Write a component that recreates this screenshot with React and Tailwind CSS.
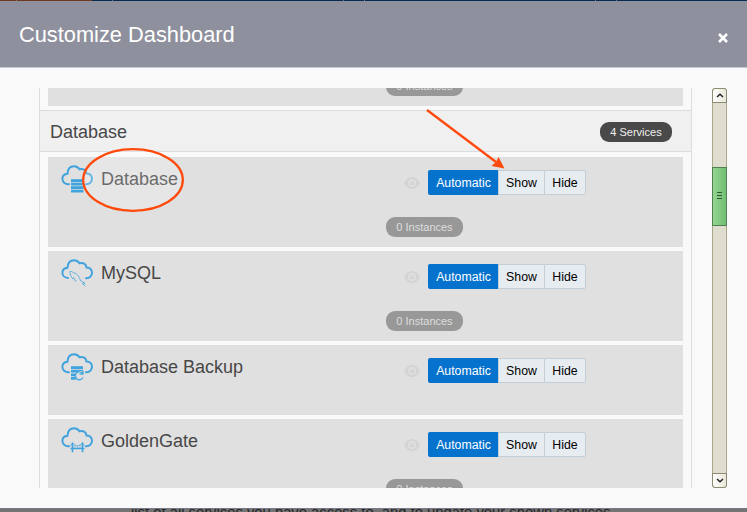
const clouds = {
  database: (
    <g fill="#41a3dd" stroke="none">
      <rect x="10" y="14.200" width="12.500" height="2.800" />
      <rect x="10" y="17.700" width="12.500" height="2.800" />
      <rect x="10" y="21.200" width="12.500" height="2.800" />
      <rect x="10" y="24.700" width="12.500" height="2.800" />
    </g>
  ),
  mysql: (
    <g strokeWidth="0.9" opacity="0.85">
      <path d="M12 20 C10 18 8.500 14 8.800 12.500 C10 12 11.500 13 12.500 13.700 C17 14.500 18.500 19 19.800 22 C21 22.700 23 23.300 24 24.300 L21.500 24.700 L24.300 27.200" />
      <path d="M12 20 L12.700 18.500 L14.500 22.300 L15.500 21.500" />
    </g>
  ),
  backup: (
    <g fill="#41a3dd" stroke="none">
      <rect x="10" y="13.200" width="12" height="2.800" />
      <path d="M10 16.800h12v1.200h-4l-2 1.600h-6z" />
      <path d="M10 20.500h5l-1 2.800h-4zM10 24h4l1 2.700h-5z" />
      <path d="M21.500 20.300 A4 4 0 1 0 22 24.500 M22 17.800v3.300h-3.500" fill="none" stroke="#41a3dd" strokeWidth="1.300" />
    </g>
  ),
  gate: (
    <g strokeWidth="1.300">
      <path d="M11.500 15.500v9.800M21.500 15.500v9.800" strokeWidth="1.700" />
      <path d="M9.500 21.500h14" strokeWidth="1.500" />
      <path d="M9 19Q10.800 18 11.500 16Q16.500 21.500 21.500 16Q22.200 18 24 19" strokeWidth="1" opacity="0.700" />
      <path d="M14 18v3M16.500 19v2M19 18v3" strokeWidth="0.800" opacity="0.700" />
    </g>
  ),
};

const cloudOutlines = {
  wide: 'M8 19.200C4 19.600 1.200 16.700 1.400 13.600C1.500 10.700 3.500 9 6.500 8.700C6.800 4 9.300 1.300 13 1.300C15.500 1.300 17.200 2.300 18.500 4.300C22.200 3.300 25 5 25.500 8.500C29 8.400 31 10.700 31 13.800C31 16.800 28.500 19.400 25 19.200',
  open: 'M7 19C4 18.700 1.200 16.700 1.400 13.600C1.500 10.700 3.500 9 6.500 8.700C6.800 4 9.300 1.300 13 1.300C15.500 1.300 17.200 2.300 18.500 4.300C22.200 3.300 25 5 25.500 8.500C29 8.400 31 10.700 31 13.800C31 16.800 28.500 19.400 25 19.200',
};

function CloudIcon({ kind }) {
  return (
    <svg className="h-[30px] w-[33px] shrink-0" viewBox="0 0 33 30" fill="none" stroke="#41a3dd">
      <path d={kind === 'mysql' ? cloudOutlines.open : cloudOutlines.wide} strokeWidth="2" strokeLinecap="round" />
      {clouds[kind]}
    </svg>
  );
}

function EyeIcon() {
  return (
    <svg className="h-3 w-4" viewBox="0 0 16 12">
      <path d="M0 6C2 2 4.800 0 8 0S14 2 16 6C14 10 11.200 12 8 12S2 10 0 6Z" fill="#d2d3d4" />
      <circle cx="8" cy="6" r="4" fill="#e0e0e0" />
      <circle cx="8" cy="6" r="2.500" fill="#d2d3d4" />
      <circle cx="7.200" cy="5" r="1" fill="#e0e0e0" />
    </svg>
  );
}

function InstanceBadge() {
  return (
    <span className="flex h-5 w-[77px] items-center justify-center rounded-[9px] bg-[#989898] text-[11px] leading-5 text-[#dedede]">
      0 Instances
    </span>
  );
}

function ServiceCard({ name, kind, short }) {
  return (
    <div className={`flex shrink-0 flex-col bg-[#e0e0e0] ${short ? 'h-[70px]' : 'h-[90px]'}`}>
      <div className="flex h-[60px] shrink-0 items-start">
        <div className="flex w-[356px] pt-2 pl-[13px]">
          <CloudIcon kind={kind} />
          <span className="pl-[7px] text-[18px] leading-7 text-[#474747]">{name}</span>
        </div>
        <div className="mt-[13px] flex h-[25px] items-center pt-px">
          <EyeIcon />
        </div>
        <div className="mt-[13px] ml-2 flex h-[25px] w-[158px] text-[12.300px] text-black">
          <span className="w-[70px] rounded-l-xs bg-[#0572ce] pl-px text-center leading-[27px] text-white">Automatic</span>
          <span className="w-[46px] border-y border-l border-[#c4ced7] bg-[#e7ecf1] text-center leading-[25px]">Show</span>
          <span className="w-[42px] rounded-r-xs border border-[#c4ced7] bg-[#e7ecf1] text-center leading-[25px]">Hide</span>
        </div>
      </div>
      {!short && (
        <div className="pl-[338px]">
          <InstanceBadge />
        </div>
      )}
    </div>
  );
}

function Scrollbar() {
  return (
    <div className="flex h-[400px] w-[15px] flex-col rounded-[3px] border border-[#aaa888] bg-[#dfddce]">
      <div className="-mx-px -mt-px flex h-[15px] shrink-0 items-center justify-center rounded-t-[3px] border border-[#8f8b70] bg-linear-to-r from-white to-[#e9e7da]">
        <svg className="h-[5px] w-2" viewBox="0 0 8 5" fill="none" stroke="#222" strokeWidth="1.500">
          <path d="M1 4L4 1.300L7 4" />
        </svg>
      </div>
      <div className="-mx-px mt-16 flex h-[59px] shrink-0 flex-col items-center gap-[2px] border border-[#4f8052] bg-linear-to-r from-[#92d58f] to-[#72bf73] pt-6">
        <span className="h-px w-[5px] bg-[#315734]" />
        <span className="h-px w-[5px] bg-[#315734]" />
        <span className="h-px w-[5px] bg-[#315734]" />
      </div>
      <div className="-mx-px mt-auto -mb-px flex h-[15px] shrink-0 items-center justify-center rounded-b-[3px] border border-[#8f8b70] bg-linear-to-r from-white to-[#e9e7da]">
        <svg className="h-[5px] w-2" viewBox="0 0 8 5" fill="none" stroke="#222" strokeWidth="1.500">
          <path d="M1 1L4 3.700L7 1" />
        </svg>
      </div>
    </div>
  );
}

function Annotations() {
  return (
    <svg className="pointer-events-none absolute inset-0 h-[512px] w-[747px]" viewBox="0 0 747 512">
      <ellipse cx="133" cy="180" rx="49.800" ry="30.800" fill="#fff" fillOpacity="0.200" stroke="#ff4a0c" strokeWidth="2.300" />
      <path d="M427 110L496 162" stroke="#ff4a0c" strokeWidth="2.300" />
      <path d="M504.500 168.500L498.500 157L496 162L491.500 166Z" fill="#ff4a0c" />
    </svg>
  );
}

export default function App() {
  return (
    <div className="relative flex h-[512px] w-[747px] flex-col overflow-hidden bg-[#747474] font-['Liberation_Sans',Arial,sans-serif]">
      <div className="flex h-px shrink-0 bg-[#062c52]">
        <span className="w-4 bg-[#70381f]" />
        <span className="w-px bg-[#7c7770]" />
        <span className="w-[75px] bg-[#70381f]" />
        <span className="ml-5 w-px bg-[#6f7176]" />
        <span className="ml-[230px] w-px bg-[#6f7176]" />
        <span className="ml-5 w-px bg-[#6f7176]" />
        <span className="ml-[230px] w-px bg-[#6f7176]" />
        <span className="ml-5 w-px bg-[#6f7176]" />
      </div>
      <header className="flex h-[67px] shrink-0 items-center justify-between border-b border-[#c7cad2] bg-[#8f909d] px-[19px]">
        <h1 className="pt-px text-[21.800px] leading-[66px] text-white">Customize Dashboard</h1>
        <svg className="mt-2 h-[10px] w-[10px]" viewBox="0 0 10 10" stroke="#fff" strokeWidth="2.600">
          <path d="M1 1L9 9M9 1L1 9" />
        </svg>
      </header>
      <main className="flex h-[441px] shrink-0 items-start border-b border-[#77788a] bg-[#f9f9f9] pt-5 pl-[39px]">
        <div className="h-[400px] w-[653px] overflow-hidden border-x border-[#dadde1]">
          <div className="mx-2 -mt-[72px] flex h-[90px] items-end bg-[#e0e0e0] pb-[10px] pl-[338px]">
            <InstanceBadge />
          </div>
          <div className="mt-1 flex h-[42px] items-center justify-between border-y border-[#d9dde1] bg-[#f0f0f0] pr-[19px] pl-[10px]">
            <h2 className="pt-0.5 text-[18px] leading-[38px] text-[#474747]">Database</h2>
            <span className="mt-px flex h-5 w-[72px] items-center justify-center rounded-[9px] bg-[#494949] text-[11px] leading-5 text-[#f0f0f0]">
              4 Services
            </span>
          </div>
          <div className="flex flex-col gap-1 px-2 pt-[5px]">
            <ServiceCard name="Database" kind="database" />
            <ServiceCard name="MySQL" kind="mysql" />
            <ServiceCard name="Database Backup" kind="backup" short />
            <ServiceCard name="GoldenGate" kind="gate" />
          </div>
        </div>
        <div className="ml-5">
          <Scrollbar />
        </div>
      </main>
      <p className="-mt-[5px] h-[8px] shrink-0 pl-[131px] text-[14.800px] leading-4 whitespace-nowrap text-[#252525] [clip-path:inset(5px_0_0_0)]">
        list of all services you have access to, and to update your shown services
      </p>
      <Annotations />
    </div>
  );
}
